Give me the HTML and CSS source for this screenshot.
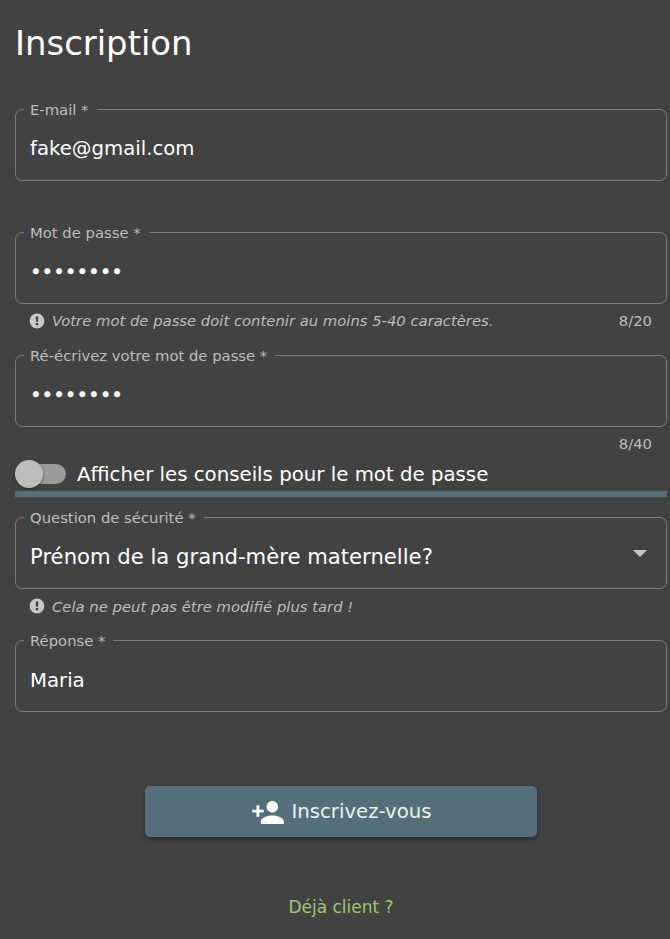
FILE: index.html
```html
<!DOCTYPE html>
<html lang="fr">
<head>
<meta charset="utf-8">
<title>Inscription</title>
<link rel="stylesheet" href="styles.css">
</head>
<body>
<main class="page">
  <h1 class="title">Inscription</h1>
  <form class="form">
    <div class="field">
      <fieldset class="outline"><legend class="label">E-mail *</legend><div class="value">fake@gmail.com</div></fieldset>
    </div>
    <div class="field">
      <fieldset class="outline"><legend class="label">Mot de passe *</legend><div class="value dots">••••••••</div></fieldset>
      <div class="helper">
        <svg class="info" viewBox="0 0 16 16"><circle cx="8" cy="8" r="7.4"/><path d="M6.7 3.4h2.6l-.3 5.4H7zM6.8 10h2.400v2.300H6.800z"/></svg>
        <em class="hint">Votre mot de passe doit contenir au moins 5-40 caractères.</em>
        <span class="count">8/20</span>
      </div>
    </div>
    <div class="field last-password">
      <fieldset class="outline"><legend class="label">Ré-écrivez votre mot de passe *</legend><div class="value dots">••••••••</div></fieldset>
      <div class="helper"><span class="count">8/40</span></div>
    </div>
    <div class="toggle">
      <span class="switch"><span class="thumb"></span></span>
      <span class="toggle-text">Afficher les conseils pour le mot de passe</span>
    </div>
    <div class="bar"></div>
    <div class="field">
      <fieldset class="outline"><legend class="label">Question de sécurité *</legend><div class="value select"><span>Prénom de la grand-mère maternelle?</span><svg class="arrow" viewBox="0 0 14 7"><path d="M0 0h14L7 7z"/></svg></div></fieldset>
      <div class="helper question-helper">
        <svg class="info raised" viewBox="0 0 16 16"><circle cx="8" cy="8" r="7.4"/><path d="M6.7 3.4h2.6l-.3 5.4H7zM6.8 10h2.400v2.300H6.800z"/></svg>
        <em class="hint">Cela ne peut pas être modifié plus tard !</em>
      </div>
    </div>
    <div class="field">
      <fieldset class="outline"><legend class="label">Réponse *</legend><div class="value answer">Maria</div></fieldset>
    </div>
    <button class="submit" type="button">
      <svg class="person" viewBox="1 4 22 16"><path d="M15 12c2.21 0 4-1.79 4-4s-1.790-4-4-4-4 1.790-4 4 1.790 4 4 4zm-9-2V7H4v3H1v2h3v3h2v-3h3v-2H6zm9 4c-2.670 0-8 1.340-8 4v2h16v-2c0-2.660-5.330-4-8-4z"/></svg>
      <span>Inscrivez-vous</span>
    </button>
    <a class="login">Déjà client ?</a>
  </form>
</main>
</body>
</html>
```
FILE: styles.css
```css
* { box-sizing: border-box; }
body {
  margin: 0;
  background: #424242;
  color: #fff;
  font-family: "DejaVu Sans", sans-serif;
  font-size: 19.7px;
}
.page { height: 939px; padding: 23px 3px 0 15px; overflow: hidden; }
.title { margin: 0; height: 76px; font-size: 33.9px; font-weight: 400; line-height: 42px; }
.form { display: flex; flex-direction: column; }
.field { height: 123px; }
.last-password { height: 112px; }
.outline {
  height: 82px;
  margin: 0;
  padding: 0 12px 0 8px;
  border: 1px solid #7b7b7b;
  border-radius: 7px;
  min-width: 0;
}
.label {
  height: 20px;
  padding: 0 8px 0 6px;
  font-size: 14.8px;
  line-height: 22px;
  color: #bdbdbd;
  white-space: nowrap;
}
.value { height: 40px; margin-top: 10px; padding-left: 6px; line-height: 40px; white-space: nowrap; }
.answer { margin-top: 11px; }
.dots { -webkit-text-stroke: 0.3px #fff; }
.select { display: flex; justify-content: space-between; align-items: center; font-size: 21.17px; }
.arrow { width: 14px; height: 7px; fill: #c8c8c8; margin: -8px 7px 0 0; }
.helper { display: flex; align-items: center; height: 32px; padding: 0 15px 0 14px; font-size: 14.8px; color: #bdbdbd; }
.question-helper { height: 34px; }
.info { width: 16px; height: 16px; margin: 1px 7px 0 0; fill: #424242; }
.info circle { fill: #c8c8c8; }
.raised { margin-top: -1px; }
.hint { white-space: nowrap; }
.count { margin-left: auto; }
.toggle { display: flex; align-items: center; height: 34px; }
.switch { width: 51px; height: 20px; margin-right: 11px; border-radius: 10px; background: #9b9b9b; display: flex; align-items: center; }
.toggle-text { font-size: 19.75px; }
.thumb { flex: none; width: 28px; height: 28px; border-radius: 50%; background: #bdbdbd; box-shadow: 0 1px 3px rgba(0,0,0,.45); }
.bar { height: 6px; margin-bottom: 10px; background: #546e7a; }
.submit {
  display: flex;
  align-items: center;
  justify-content: center;
  align-self: center;
  width: 392px;
  height: 51px;
  margin: 33px 0 0;
  padding: 0 0 0 2px;
  border: 0;
  border-radius: 5px;
  background: #546e7a;
  box-shadow: 0 2px 4px rgba(0,0,0,.4);
  color: #eef1f2;
  font: inherit;
}
.person { width: 32px; height: 23px; margin: 2px 7px 0 0; fill: #fff; }
.login { align-self: center; margin-top: 56px; color: #9cc970; font-size: 17px; line-height: 28px; }
```
